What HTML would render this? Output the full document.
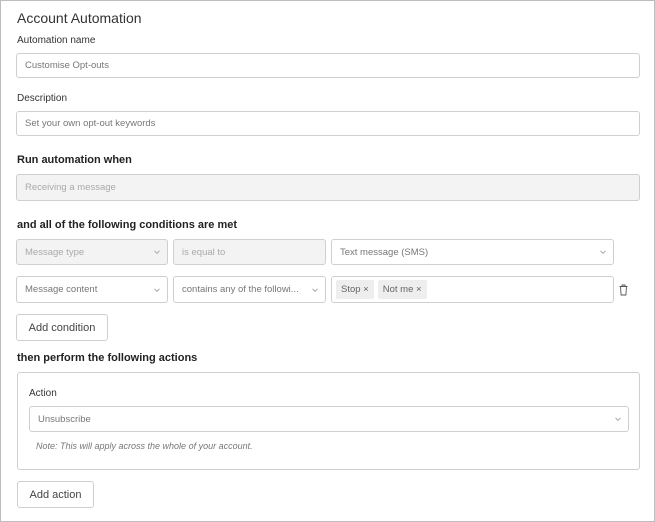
<!DOCTYPE html>
<html><head><style>
*{box-sizing:border-box;margin:0;padding:0}
body{width:655px;height:522px;background:#fff;font-family:"Liberation Sans",sans-serif;color:#333;position:relative;overflow:hidden}
.frame{position:absolute;left:0;top:0;width:655px;height:522px;border:1px solid #bdbdbd}
.a{position:absolute}
.lbl{font-size:10px;color:#333}
.h{font-size:11px;font-weight:bold;color:#222}
.box{position:absolute;border:1px solid #cfcfcf;border-radius:3px;background:#fff;font-size:9.5px;color:#777;padding-left:8px;display:flex;align-items:center}
.dis{background:#f3f3f3;color:#aaa}
.chev{position:absolute;right:8px;top:50%;width:4px;height:4px;border-right:1px solid #aaa;border-bottom:1px solid #aaa;transform:translateY(-70%) rotate(45deg)}
.tag{background:#eee;border-radius:2px;padding:4px 5px;font-size:9.5px;color:#666;margin-right:4px}
.btn{position:absolute;border:1px solid #cfcfcf;border-radius:3px;font-size:11px;color:#444;display:flex;align-items:center;justify-content:center;background:#fff}
</style></head><body>
<div class="frame"></div>
<div class="a" style="left:17px;top:10px;font-size:14px;color:#333">Account Automation</div>
<div class="a lbl" style="left:17px;top:35px">Automation name</div>
<div class="box" style="left:16px;top:53px;width:624px;height:25px">Customise Opt-outs</div>
<div class="a lbl" style="left:17px;top:93px">Description</div>
<div class="box" style="left:16px;top:111px;width:624px;height:25px">Set your own opt-out keywords</div>
<div class="a h" style="left:17px;top:154px">Run automation when</div>
<div class="box dis" style="left:16px;top:174px;width:624px;height:27px">Receiving a message</div>
<div class="a h" style="left:17px;top:219px">and all of the following conditions are met</div>
<div class="box dis" style="left:16px;top:239px;width:152px;height:26px">Message type<span class="chev"></span></div>
<div class="box dis" style="left:173px;top:239px;width:153px;height:26px">is equal to</div>
<div class="box" style="left:331px;top:239px;width:283px;height:26px">Text message (SMS)<span class="chev"></span></div>
<div class="box" style="left:16px;top:276px;width:152px;height:27px">Message content<span class="chev"></span></div>
<div class="box" style="left:173px;top:276px;width:153px;height:27px">contains any of the followi...<span class="chev"></span></div>
<div class="box" style="left:331px;top:276px;width:283px;height:27px;padding-left:4px"><span class="tag">Stop ×</span><span class="tag">Not me ×</span></div>
<svg class="a" style="left:618px;top:284px" width="11" height="12" viewBox="0 0 11 12" fill="none" stroke="#555" stroke-width="0.9"><path d="M1.5 2.5h8M4 2.5V1h3v1.5M2.5 2.5l.6 8.5h4.8l.6-8.5"/></svg>
<div class="btn" style="left:16px;top:314px;width:92px;height:27px">Add condition</div>
<div class="a h" style="left:17px;top:352px">then perform the following actions</div>
<div class="a" style="left:17px;top:372px;width:623px;height:98px;border:1px solid #cfcfcf;border-radius:3px"></div>
<div class="a lbl" style="left:29px;top:388px">Action</div>
<div class="box" style="left:29px;top:406px;width:600px;height:26px">Unsubscribe<span class="chev"></span></div>
<div class="a" style="left:36px;top:441px;font-size:9px;font-style:italic;color:#777">Note: This will apply across the whole of your account.</div>
<div class="btn" style="left:17px;top:481px;width:77px;height:27px">Add action</div>
</body></html>
